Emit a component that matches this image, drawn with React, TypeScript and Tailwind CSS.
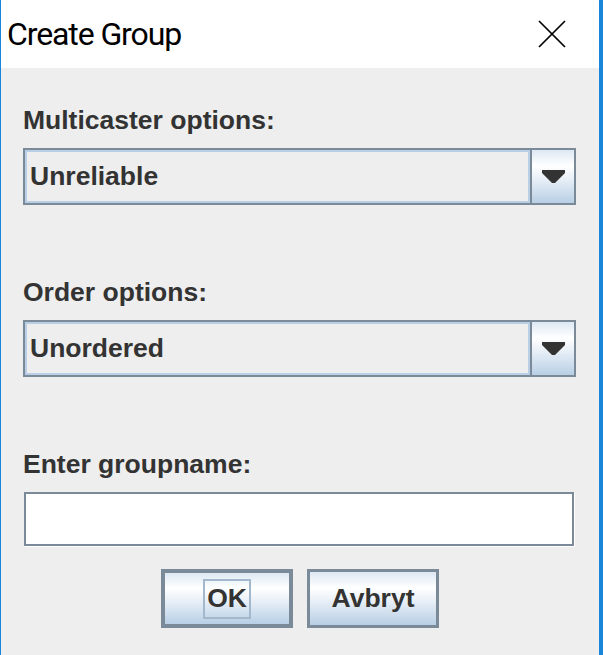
import React from 'react';

const oceanGradient =
  'bg-[linear-gradient(to_bottom,#dde8f3_0%,#ffffff_30%,#e8eff7_55%,#b8cfe5_100%)]';

function ArrowDown() {
  return (
    <svg width="23" height="13" viewBox="0 0 23 13">
      <polygon points="0,0 23,0 23,3 13,13 10,13 0,3" fill="#333333" />
    </svg>
  );
}

function Combo({ value }: { value: string }) {
  return (
    <div className="ml-[22px] mr-[23px] flex h-[57px] border-2 border-[#7a8a99]">
      <div className="flex flex-1 items-center border-2 border-[#b8cfe5] bg-[#eeeeee] pl-[3px] text-[26.5px] font-bold text-[#333333]">
        {value}
      </div>
      <div
        className={`flex w-[44px] items-center justify-center border-l-2 border-[#7a8a99] ${oceanGradient}`}
      >
        <ArrowDown />
      </div>
    </div>
  );
}

function Label({ children }: { children: React.ReactNode }) {
  return (
    <div className="ml-[22px] h-[32px] text-[26.5px] leading-[32px] font-bold text-[#333333]">
      {children}
    </div>
  );
}

export default function App() {
  return (
    <div className="flex h-[655px] w-[603px] flex-col border-r-4 border-l border-[#1a86d9] bg-[#eeeeee] font-['Liberation_Sans',Arial,sans-serif]">
      {/* title bar */}
      <div className="flex h-[68px] items-center justify-between bg-white pl-[6px] pr-[33px]">
        <span className="font-['Roboto',sans-serif] text-[32px] leading-[68px] tracking-[-1.1px] text-black">
          Create Group
        </span>
        <svg width="28" height="28" viewBox="0 0 28 28">
          <path d="M1 1 L27 27 M27 1 L1 27" stroke="#000" strokeWidth="1.7" />
        </svg>
      </div>

      <div className="flex flex-1 flex-col pt-[36px]">
        <Label>Multicaster options:</Label>
        <div className="mt-[12px]">
          <Combo value="Unreliable" />
        </div>

        <div className="mt-[71px]">
          <Label>Order options:</Label>
        </div>
        <div className="mt-[12px]">
          <Combo value="Unordered" />
        </div>

        <div className="mt-[71px]">
          <Label>Enter groupname:</Label>
        </div>
        <div className="ml-[23px] mr-[25px] mt-[12px] h-[54px] border-2 border-[#7a8a99] bg-white shadow-[1px_1px_0_#ffffff]" />

        <div className="mt-[23px] flex justify-center gap-[14px]">
          <button
            className={`flex h-[59px] w-[132px] items-center justify-center border-4 border-[#7a8a99] ${oceanGradient}`}
          >
            <span className="flex h-[40px] items-center border-2 border-[#a3b8cc] px-[2px] text-[26.5px] font-bold text-[#333333]">
              OK
            </span>
          </button>
          <button
            className={`flex h-[59px] w-[132px] items-center justify-center border-[3px] border-[#7a8a99] text-[26.5px] font-bold text-[#333333] ${oceanGradient}`}
          >
            Avbryt
          </button>
        </div>
      </div>
    </div>
  );
}
